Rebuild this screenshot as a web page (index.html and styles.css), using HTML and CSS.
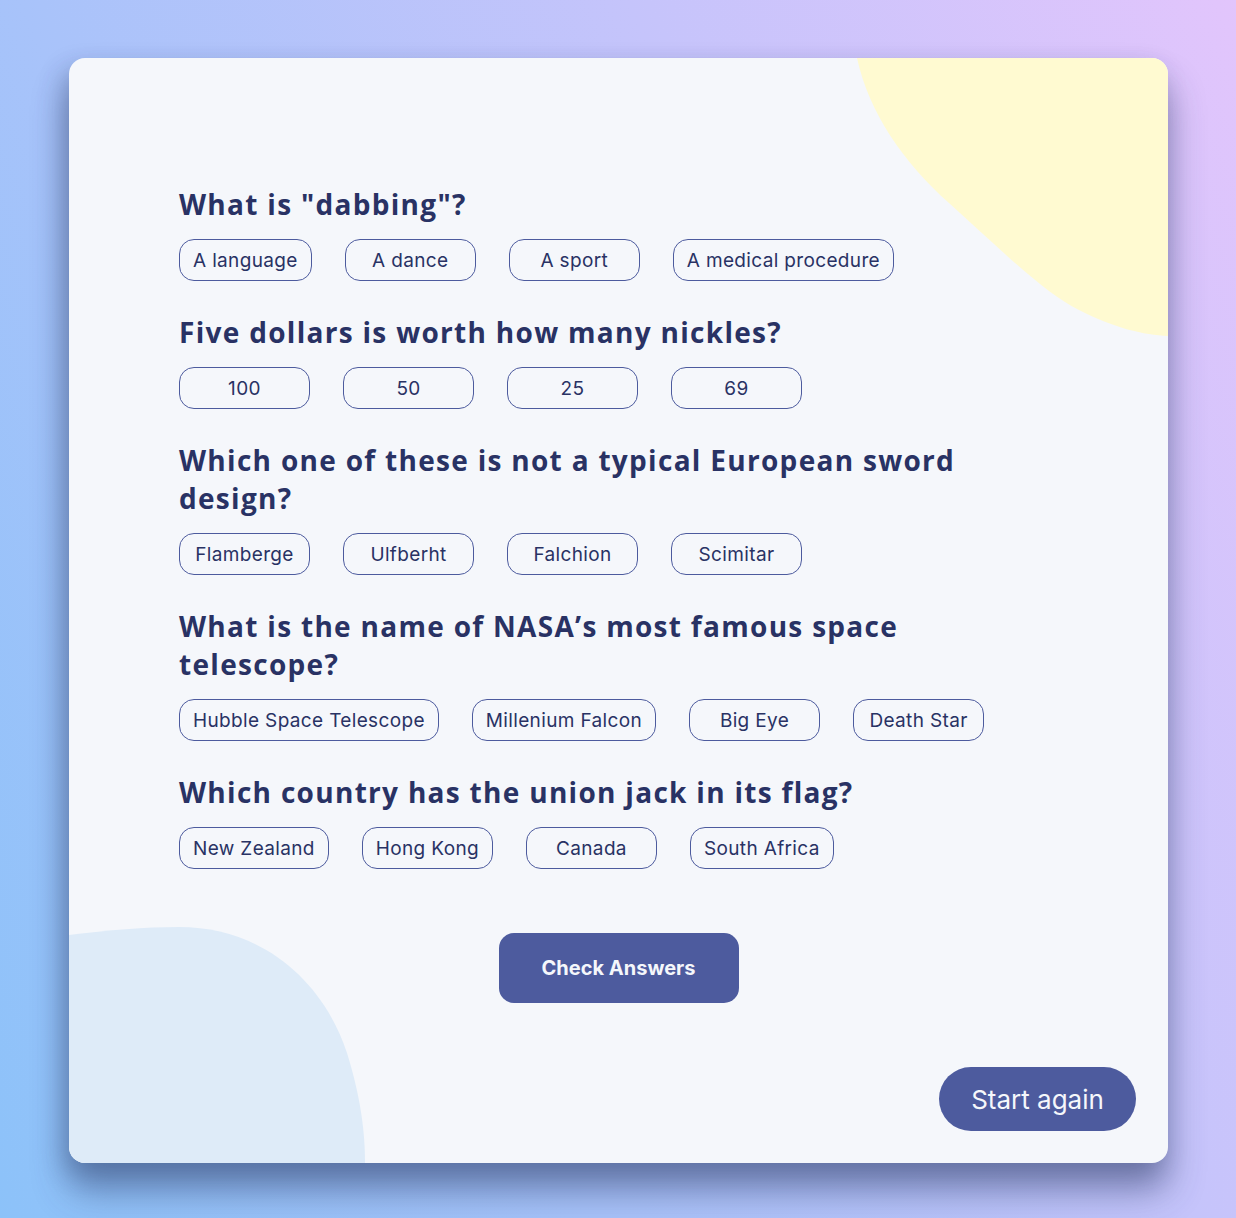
FILE: index.html
```html
<!DOCTYPE html>
<html lang="en">
<head>
<meta charset="utf-8">
<title>Quizzical</title>
<link rel="stylesheet" href="styles.css">
</head>
<body>
<main class="card">
  <svg class="blob blob-yellow" width="320" height="290" viewBox="779 0 320 290" aria-hidden="true">
    <path d="M788 0 C800 55 835 105 880 145 C930 190 975 235 1010 252 C1045 270 1075 277 1099 278 L1099 0 Z" fill="#FFFAD1"/>
  </svg>
  <svg class="blob blob-blue" width="300" height="240" viewBox="0 865 300 240" aria-hidden="true">
    <path d="M0 877 C40 872 75 869 110 869 C195 869 255 925 278 995 C292 1040 296 1075 296 1105 L0 1105 Z" fill="#DEEBF8"/>
  </svg>

  <section class="quiz">
    <div class="question">
      <h2 class="q-title">What is "dabbing"?</h2>
      <div class="answers">
        <button class="answer">A language</button>
        <button class="answer">A dance</button>
        <button class="answer">A sport</button>
        <button class="answer">A medical procedure</button>
      </div>
    </div>
    <div class="question">
      <h2 class="q-title">Five dollars is worth how many nickles?</h2>
      <div class="answers">
        <button class="answer">100</button>
        <button class="answer">50</button>
        <button class="answer">25</button>
        <button class="answer">69</button>
      </div>
    </div>
    <div class="question">
      <h2 class="q-title">Which one of these is not a typical European sword design?</h2>
      <div class="answers">
        <button class="answer">Flamberge</button>
        <button class="answer">Ulfberht</button>
        <button class="answer">Falchion</button>
        <button class="answer">Scimitar</button>
      </div>
    </div>
    <div class="question">
      <h2 class="q-title">What is the name of NASA’s most famous space telescope?</h2>
      <div class="answers">
        <button class="answer">Hubble Space Telescope</button>
        <button class="answer">Millenium Falcon</button>
        <button class="answer">Big Eye</button>
        <button class="answer">Death Star</button>
      </div>
    </div>
    <div class="question">
      <h2 class="q-title">Which country has the union jack in its flag?</h2>
      <div class="answers">
        <button class="answer">New Zealand</button>
        <button class="answer">Hong Kong</button>
        <button class="answer">Canada</button>
        <button class="answer">South Africa</button>
      </div>
    </div>
  </section>

  <div class="check-row">
    <button class="check-btn">Check Answers</button>
  </div>
  <div class="footer-row">
    <button class="restart-btn">Start again</button>
  </div>
</main>
</body>
</html>
```

FILE: styles.css
```css
* { box-sizing: border-box; }

html, body {
  margin: 0;
  padding: 0;
}

body {
  min-height: 1218px;
  padding: 58px 68px 55px 69px;
  background: linear-gradient(65deg, #8cc2f9 0%, #e2c5fc 100%);
  font-family: Inter, "Liberation Sans", sans-serif;
}

.card {
  position: relative;
  overflow: hidden;
  width: 1099px;
  height: 1105px;
  background: #F5F7FB;
  border-radius: 16px;
  box-shadow: 0 28px 36px rgba(40, 55, 100, 0.45), -6px 10px 24px rgba(40, 55, 100, 0.25);
  padding: 127px 0 32px;
  display: flex;
  flex-direction: column;
}

.blob {
  position: absolute;
  display: block;
}
.blob-yellow { top: 0; right: 0; }
.blob-blue { bottom: 0; left: 0; }

.quiz {
  position: relative;
  padding: 0 110px;
  display: flex;
  flex-direction: column;
  gap: 32px;
}

.question {
  display: flex;
  flex-direction: column;
  gap: 16px;
}

.q-title {
  margin: 0;
  max-width: 820px;
  font-family: "Open Sans", "DejaVu Sans", sans-serif;
  font-weight: 700;
  font-size: 28px;
  line-height: 38px;
  letter-spacing: 1.3px;
  color: #293264;
}

.answers {
  display: flex;
  gap: 33px;
}

.answer {
  min-width: 131px;
  height: 42px;
  padding: 0 13px;
  border: 1.3px solid #4D5B9E;
  border-radius: 15px;
  background: transparent;
  font-family: Inter, "Liberation Sans", sans-serif;
  font-size: 19px;
  letter-spacing: 0.35px;
  color: #293264;
}

.check-row {
  position: relative;
  display: flex;
  justify-content: center;
  margin-top: 64px;
}

.check-btn {
  width: 240px;
  height: 70px;
  border: none;
  border-radius: 15px;
  background: #4D5B9E;
  color: #F5F7FB;
  font-family: Inter, "Liberation Sans", sans-serif;
  font-weight: 700;
  font-size: 20px;
}

.footer-row {
  position: relative;
  display: flex;
  justify-content: flex-end;
  margin-top: 64px;
  padding-right: 32px;
}

.restart-btn {
  width: 197px;
  height: 64px;
  border: none;
  border-radius: 32px;
  background: #4D5B9E;
  color: #F5F7FB;
  font-family: Inter, "Liberation Sans", sans-serif;
  font-size: 26px;
}
```
